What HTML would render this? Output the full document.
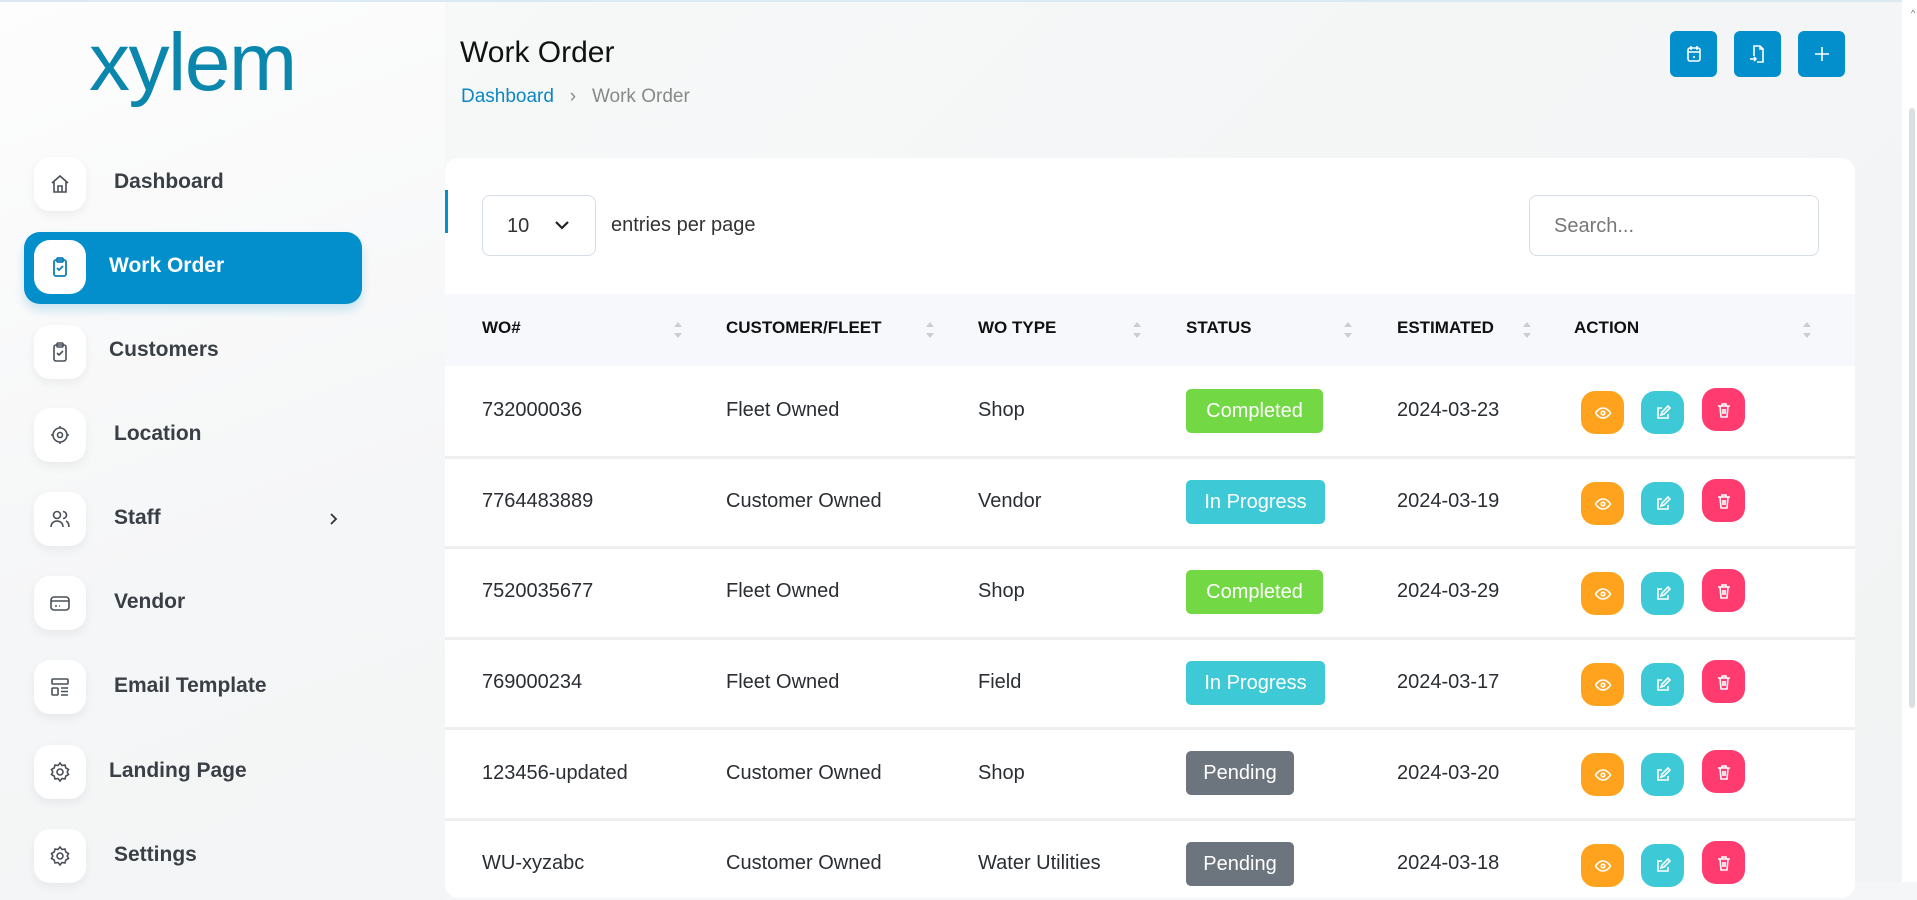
<!DOCTYPE html>
<html><head><meta charset="utf-8">
<style>
*{box-sizing:border-box;margin:0;padding:0}
html{background:#f4f6f7}
body{width:1917px;height:882px;overflow:hidden;font-family:"Liberation Sans",sans-serif;background:linear-gradient(135deg,#f8f9f9,#f1f3f4);position:relative;color:#222}
.abs{position:absolute}
.side{left:0;top:0;width:445px;height:900px;background:linear-gradient(160deg,#fdfdfd,#f5f6f7 60%,#f3f5f6)}
.logo{left:89px;top:18px;font-size:82px;color:#0b87ad;letter-spacing:-1.5px;line-height:90px;font-weight:normal}
.ib{width:52px;height:54px;background:#fff;border-radius:16px;box-shadow:0 4px 10px rgba(0,0,0,.06);display:flex;align-items:center;justify-content:center}
.lbl{font-size:21px;font-weight:bold;color:#3a3f45;line-height:24px}
.active{left:24px;top:232px;width:338px;height:72px;background:#028fcc;border-radius:16px;box-shadow:0 6px 10px rgba(2,143,204,.2)}
svg{display:block}
.title{left:460px;top:36px;font-size:30px;color:#111}
.bc{left:461px;top:86px;font-size:19px;color:#888}
.bc b{font-weight:normal;color:#0b87c4}
.tb{width:47px;height:46px;background:#028fcc;border-radius:6px;top:31px;display:flex;align-items:center;justify-content:center}
.card{left:445px;top:158px;width:1410px;height:740px;background:#fff;border-radius:14px}
.sel{left:482px;top:195px;width:114px;height:61px;border:1px solid #d6dde4;border-radius:8px;font-size:20px;color:#333;padding:19px 0 0 24px}
.hdr{left:445px;top:294px;width:1410px;height:72px;background:#f6f8fb}
.h{top:318px;font-size:17px;font-weight:bold;color:#111}
.sort{width:10px;height:24px;top:318px}
.row{left:445px;width:1410px;height:3px;background:#efefef}
.c{font-size:20px;color:#2a2e33}
.bd{left:1186px;height:44px;border-radius:5px;color:#fff;font-size:20px;line-height:44px;text-align:center}
.ab{width:43px;height:43px;border-radius:14px;display:flex;align-items:center;justify-content:center}
</style></head><body>
<div class="abs side"></div>
<div class="abs" style="left:0;top:0;width:1917px;height:2px;background:#dbe9f1"></div>
<div class="abs logo">xylem</div>

<div class="abs active"></div>
<div class="abs ib" style="left:34px;top:157px"><svg width="24" height="24" viewBox="0 0 24 24" fill="none" stroke="#4a5058" stroke-width="1.6"><path d="M4 11l8-7 8 7M6 9v11h12V9M10 20v-6h4v6"/></svg></div>
<div class="abs lbl" style="left:114px;top:170px">Dashboard</div>

<div class="abs ib" style="left:34px;top:240px;box-shadow:none"><svg width="24" height="24" viewBox="0 0 24 24" fill="none" stroke="#0b7fb5" stroke-width="1.8"><rect x="6" y="5" width="12" height="16" rx="2"/><rect x="9" y="3" width="6" height="4" rx="1"/><path d="M9 13l2 2 4-4"/></svg></div>
<div class="abs lbl" style="left:109px;top:254px;color:#fff">Work Order</div>

<div class="abs ib" style="left:34px;top:325px"><svg width="24" height="24" viewBox="0 0 24 24" fill="none" stroke="#4a5058" stroke-width="1.6"><rect x="6" y="5" width="12" height="16" rx="2"/><rect x="9" y="3" width="6" height="4" rx="1"/><path d="M9 13l2 2 4-4"/></svg></div>
<div class="abs lbl" style="left:109px;top:338px">Customers</div>

<div class="abs ib" style="left:34px;top:408px"><svg width="24" height="24" viewBox="0 0 24 24" fill="none" stroke="#4a5058" stroke-width="1.6"><circle cx="12" cy="12" r="7"/><circle cx="12" cy="12" r="2.5"/><path d="M12 3v2M12 19v2M3 12h2M19 12h2"/></svg></div>
<div class="abs lbl" style="left:114px;top:422px">Location</div>

<div class="abs ib" style="left:34px;top:492px"><svg width="24" height="24" viewBox="0 0 24 24" fill="none" stroke="#4a5058" stroke-width="1.6"><circle cx="9" cy="8" r="3.5"/><path d="M3 20c0-4 3-6 6-6s6 2 6 6M15 4.5a3.5 3.5 0 010 7M18 14c2 1 3 3 3 6"/></svg></div>
<div class="abs lbl" style="left:114px;top:506px">Staff</div>
<div class="abs" style="left:327px;top:512px"><svg width="14" height="14" viewBox="0 0 14 14" fill="none" stroke="#333" stroke-width="1.8"><path d="M4 2l5 5-5 5"/></svg></div>

<div class="abs ib" style="left:34px;top:576px"><svg width="24" height="24" viewBox="0 0 24 24" fill="none" stroke="#4a5058" stroke-width="1.6"><rect x="3" y="6" width="18" height="13" rx="3"/><path d="M3 10h18M7 15h2M11 15h1"/></svg></div>
<div class="abs lbl" style="left:114px;top:590px">Vendor</div>

<div class="abs ib" style="left:34px;top:660px"><svg width="24" height="24" viewBox="0 0 24 24" fill="none" stroke="#4a5058" stroke-width="1.6"><rect x="4" y="4" width="16" height="5" rx="1"/><rect x="4" y="13" width="6" height="7" rx="1"/><path d="M13 13h7M13 16.5h7M13 20h7"/></svg></div>
<div class="abs lbl" style="left:114px;top:674px">Email Template</div>

<div class="abs ib" style="left:34px;top:745px"><svg width="24" height="24" viewBox="0 0 24 24" fill="none" stroke="#4a5058" stroke-width="1.6"><circle cx="12" cy="12" r="3"/><path d="M12 3l2 2.5 3-.5.8 3 2.7 1.5-1.3 2.5 1.3 2.5-2.7 1.5-.8 3-3-.5L12 21l-2-2.5-3 .5-.8-3-2.7-1.5L4.8 12 3.5 9.5 6.2 8 7 5l3 .5z"/></svg></div>
<div class="abs lbl" style="left:109px;top:759px">Landing Page</div>

<div class="abs ib" style="left:34px;top:829px"><svg width="24" height="24" viewBox="0 0 24 24" fill="none" stroke="#4a5058" stroke-width="1.6"><circle cx="12" cy="12" r="3"/><path d="M12 3l2 2.5 3-.5.8 3 2.7 1.5-1.3 2.5 1.3 2.5-2.7 1.5-.8 3-3-.5L12 21l-2-2.5-3 .5-.8-3-2.7-1.5L4.8 12 3.5 9.5 6.2 8 7 5l3 .5z"/></svg></div>
<div class="abs lbl" style="left:114px;top:843px">Settings</div>

<div class="abs title">Work Order</div>
<div class="abs bc"><b>Dashboard</b> &nbsp;&nbsp;›&nbsp;&nbsp; Work Order</div>

<div class="abs tb" style="left:1670px"><svg width="22" height="22" viewBox="0 0 22 22" fill="none" stroke="#fff" stroke-width="1.6"><rect x="5" y="5" width="12" height="13" rx="2"/><path d="M5 9h12M8 3v4M14 3v4M11 13v2"/></svg></div>
<div class="abs tb" style="left:1734px"><svg width="22" height="22" viewBox="0 0 22 22" fill="none" stroke="#fff" stroke-width="1.6"><path d="M7 13V3h6l3 3v13H10M13 3v3h3M3 16h6M7 14l2 2-2 2"/></svg></div>
<div class="abs tb" style="left:1798px"><svg width="22" height="22" viewBox="0 0 22 22" fill="none" stroke="#fff" stroke-width="1.6"><path d="M11 4v14M4 11h14"/></svg></div>

<div class="abs card"></div>
<div class="abs" style="left:445px;top:190px;width:3px;height:43px;background:#028fcc"></div>
<div class="abs sel">10</div>
<div class="abs" style="left:554px;top:219px"><svg width="16" height="12" viewBox="0 0 16 12" fill="none" stroke="#222" stroke-width="2.2"><path d="M2 3l6 6 6-6"/></svg></div>
<div class="abs c" style="left:611px;top:214px;color:#333">entries per page</div>
<div class="abs" style="left:1529px;top:195px;width:290px;height:61px;border:1px solid #d6dde4;border-radius:8px;font-size:20px;color:#777;padding:19px 0 0 24px">Search...</div>

<div class="abs hdr"></div>
<div class="abs h" style="left:482px">WO#</div>
<div class="abs h" style="left:726px">CUSTOMER/FLEET</div>
<div class="abs h" style="left:978px">WO TYPE</div>
<div class="abs h" style="left:1186px">STATUS</div>
<div class="abs h" style="left:1397px">ESTIMATED</div>
<div class="abs h" style="left:1574px">ACTION</div>
<svg class="abs sort" style="left:673px" viewBox="0 0 10 24"><path d="M5 4l4 5H1z" fill="#c8ced5"/><path d="M5 20l4-5H1z" fill="#c8ced5"/></svg>
<svg class="abs sort" style="left:925px" viewBox="0 0 10 24"><path d="M5 4l4 5H1z" fill="#c8ced5"/><path d="M5 20l4-5H1z" fill="#c8ced5"/></svg>
<svg class="abs sort" style="left:1132px" viewBox="0 0 10 24"><path d="M5 4l4 5H1z" fill="#c8ced5"/><path d="M5 20l4-5H1z" fill="#c8ced5"/></svg>
<svg class="abs sort" style="left:1343px" viewBox="0 0 10 24"><path d="M5 4l4 5H1z" fill="#c8ced5"/><path d="M5 20l4-5H1z" fill="#c8ced5"/></svg>
<svg class="abs sort" style="left:1522px" viewBox="0 0 10 24"><path d="M5 4l4 5H1z" fill="#c8ced5"/><path d="M5 20l4-5H1z" fill="#c8ced5"/></svg>
<svg class="abs sort" style="left:1802px" viewBox="0 0 10 24"><path d="M5 4l4 5H1z" fill="#c8ced5"/><path d="M5 20l4-5H1z" fill="#c8ced5"/></svg>

<div class="abs row" style="top:456px"></div>
<div class="abs row" style="top:546px"></div>
<div class="abs row" style="top:637px"></div>
<div class="abs row" style="top:727px"></div>
<div class="abs row" style="top:818px"></div>

<div class="abs c" style="left:482px;top:399px">732000036</div>
<div class="abs c" style="left:726px;top:399px">Fleet Owned</div>
<div class="abs c" style="left:978px;top:399px">Shop</div>
<div class="abs bd" style="top:389px;width:137px;background:#72d844">Completed</div>
<div class="abs c" style="left:1397px;top:399px">2024-03-23</div>

<div class="abs c" style="left:482px;top:490px">7764483889</div>
<div class="abs c" style="left:726px;top:490px">Customer Owned</div>
<div class="abs c" style="left:978px;top:490px">Vendor</div>
<div class="abs bd" style="top:480px;width:139px;background:#3ec9d6">In Progress</div>
<div class="abs c" style="left:1397px;top:490px">2024-03-19</div>

<div class="abs c" style="left:482px;top:580px">7520035677</div>
<div class="abs c" style="left:726px;top:580px">Fleet Owned</div>
<div class="abs c" style="left:978px;top:580px">Shop</div>
<div class="abs bd" style="top:570px;width:137px;background:#72d844">Completed</div>
<div class="abs c" style="left:1397px;top:580px">2024-03-29</div>

<div class="abs c" style="left:482px;top:671px">769000234</div>
<div class="abs c" style="left:726px;top:671px">Fleet Owned</div>
<div class="abs c" style="left:978px;top:671px">Field</div>
<div class="abs bd" style="top:661px;width:139px;background:#3ec9d6">In Progress</div>
<div class="abs c" style="left:1397px;top:671px">2024-03-17</div>

<div class="abs c" style="left:482px;top:762px">123456-updated</div>
<div class="abs c" style="left:726px;top:762px">Customer Owned</div>
<div class="abs c" style="left:978px;top:762px">Shop</div>
<div class="abs bd" style="top:751px;width:108px;background:#6c757d">Pending</div>
<div class="abs c" style="left:1397px;top:762px">2024-03-20</div>

<div class="abs c" style="left:482px;top:852px">WU-xyzabc</div>
<div class="abs c" style="left:726px;top:852px">Customer Owned</div>
<div class="abs c" style="left:978px;top:852px">Water Utilities</div>
<div class="abs bd" style="top:842px;width:108px;background:#6c757d">Pending</div>
<div class="abs c" style="left:1397px;top:852px">2024-03-18</div>

<div class="abs ab" style="left:1581px;top:391px;background:#ffa31f"><svg width="18" height="18" viewBox="0 0 18 18" fill="none" stroke="#fff" stroke-width="1.6"><path d="M1.5 9s3-5 7.5-5 7.5 5 7.5 5-3 5-7.5 5-7.5-5-7.5-5z"/><circle cx="9" cy="9" r="1.8"/></svg></div>
<div class="abs ab" style="left:1641px;top:391px;background:#3ec9d6"><svg width="18" height="18" viewBox="0 0 18 18" fill="none" stroke="#fff" stroke-width="1.6"><path d="M8 4H4v10h10v-4M7 11l1-3 6-6 2 2-6 6z"/></svg></div>
<div class="abs ab" style="left:1702px;top:388px;background:#ff3b6f"><svg width="18" height="18" viewBox="0 0 18 18" fill="none" stroke="#fff" stroke-width="1.6"><path d="M3 5h12M7 5V3h4v2M5 5l1 11h6l1-11M8 8v5M10 8v5"/></svg></div>

<div class="abs ab" style="left:1581px;top:482px;background:#ffa31f"><svg width="18" height="18" viewBox="0 0 18 18" fill="none" stroke="#fff" stroke-width="1.6"><path d="M1.5 9s3-5 7.5-5 7.5 5 7.5 5-3 5-7.5 5-7.5-5-7.5-5z"/><circle cx="9" cy="9" r="1.8"/></svg></div>
<div class="abs ab" style="left:1641px;top:482px;background:#3ec9d6"><svg width="18" height="18" viewBox="0 0 18 18" fill="none" stroke="#fff" stroke-width="1.6"><path d="M8 4H4v10h10v-4M7 11l1-3 6-6 2 2-6 6z"/></svg></div>
<div class="abs ab" style="left:1702px;top:479px;background:#ff3b6f"><svg width="18" height="18" viewBox="0 0 18 18" fill="none" stroke="#fff" stroke-width="1.6"><path d="M3 5h12M7 5V3h4v2M5 5l1 11h6l1-11M8 8v5M10 8v5"/></svg></div>

<div class="abs ab" style="left:1581px;top:572px;background:#ffa31f"><svg width="18" height="18" viewBox="0 0 18 18" fill="none" stroke="#fff" stroke-width="1.6"><path d="M1.5 9s3-5 7.5-5 7.5 5 7.5 5-3 5-7.5 5-7.5-5-7.5-5z"/><circle cx="9" cy="9" r="1.8"/></svg></div>
<div class="abs ab" style="left:1641px;top:572px;background:#3ec9d6"><svg width="18" height="18" viewBox="0 0 18 18" fill="none" stroke="#fff" stroke-width="1.6"><path d="M8 4H4v10h10v-4M7 11l1-3 6-6 2 2-6 6z"/></svg></div>
<div class="abs ab" style="left:1702px;top:569px;background:#ff3b6f"><svg width="18" height="18" viewBox="0 0 18 18" fill="none" stroke="#fff" stroke-width="1.6"><path d="M3 5h12M7 5V3h4v2M5 5l1 11h6l1-11M8 8v5M10 8v5"/></svg></div>

<div class="abs ab" style="left:1581px;top:663px;background:#ffa31f"><svg width="18" height="18" viewBox="0 0 18 18" fill="none" stroke="#fff" stroke-width="1.6"><path d="M1.5 9s3-5 7.5-5 7.5 5 7.5 5-3 5-7.5 5-7.5-5-7.5-5z"/><circle cx="9" cy="9" r="1.8"/></svg></div>
<div class="abs ab" style="left:1641px;top:663px;background:#3ec9d6"><svg width="18" height="18" viewBox="0 0 18 18" fill="none" stroke="#fff" stroke-width="1.6"><path d="M8 4H4v10h10v-4M7 11l1-3 6-6 2 2-6 6z"/></svg></div>
<div class="abs ab" style="left:1702px;top:660px;background:#ff3b6f"><svg width="18" height="18" viewBox="0 0 18 18" fill="none" stroke="#fff" stroke-width="1.6"><path d="M3 5h12M7 5V3h4v2M5 5l1 11h6l1-11M8 8v5M10 8v5"/></svg></div>

<div class="abs ab" style="left:1581px;top:753px;background:#ffa31f"><svg width="18" height="18" viewBox="0 0 18 18" fill="none" stroke="#fff" stroke-width="1.6"><path d="M1.5 9s3-5 7.5-5 7.5 5 7.5 5-3 5-7.5 5-7.5-5-7.5-5z"/><circle cx="9" cy="9" r="1.8"/></svg></div>
<div class="abs ab" style="left:1641px;top:753px;background:#3ec9d6"><svg width="18" height="18" viewBox="0 0 18 18" fill="none" stroke="#fff" stroke-width="1.6"><path d="M8 4H4v10h10v-4M7 11l1-3 6-6 2 2-6 6z"/></svg></div>
<div class="abs ab" style="left:1702px;top:750px;background:#ff3b6f"><svg width="18" height="18" viewBox="0 0 18 18" fill="none" stroke="#fff" stroke-width="1.6"><path d="M3 5h12M7 5V3h4v2M5 5l1 11h6l1-11M8 8v5M10 8v5"/></svg></div>

<div class="abs ab" style="left:1581px;top:844px;background:#ffa31f"><svg width="18" height="18" viewBox="0 0 18 18" fill="none" stroke="#fff" stroke-width="1.6"><path d="M1.5 9s3-5 7.5-5 7.5 5 7.5 5-3 5-7.5 5-7.5-5-7.5-5z"/><circle cx="9" cy="9" r="1.8"/></svg></div>
<div class="abs ab" style="left:1641px;top:844px;background:#3ec9d6"><svg width="18" height="18" viewBox="0 0 18 18" fill="none" stroke="#fff" stroke-width="1.6"><path d="M8 4H4v10h10v-4M7 11l1-3 6-6 2 2-6 6z"/></svg></div>
<div class="abs ab" style="left:1702px;top:841px;background:#ff3b6f"><svg width="18" height="18" viewBox="0 0 18 18" fill="none" stroke="#fff" stroke-width="1.6"><path d="M3 5h12M7 5V3h4v2M5 5l1 11h6l1-11M8 8v5M10 8v5"/></svg></div>

<div class="abs" style="left:1902px;top:0;width:15px;height:882px;background:#fff"></div>
<div class="abs" style="left:1911px;top:8px;font-size:9px;color:#666">^</div>
<div class="abs" style="left:1909px;top:108px;width:6px;height:600px;background:#dcdfe2;border-radius:3px"></div>
</body></html>
